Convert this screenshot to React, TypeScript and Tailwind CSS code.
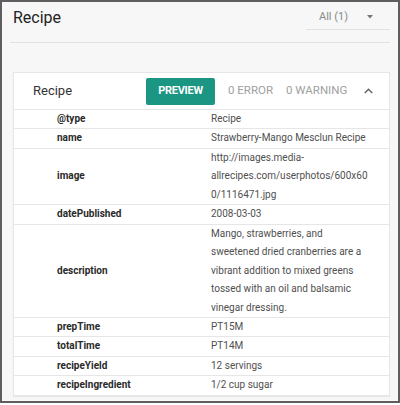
import React from "react";

const rows: { k: string; v: string }[] = [
  { k: "@type", v: "Recipe" },
  { k: "name", v: "Strawberry-Mango Mesclun Recipe" },
  { k: "image", v: "http://images.media-allrecipes.com/userphotos/600x600/1116471.jpg" },
  { k: "datePublished", v: "2008-03-03" },
  {
    k: "description",
    v: "Mango, strawberries, and sweetened dried cranberries are a vibrant addition to mixed greens tossed with an oil and balsamic vinegar dressing.",
  },
  { k: "prepTime", v: "PT15M" },
  { k: "totalTime", v: "PT14M" },
  { k: "recipeYield", v: "12 servings" },
  { k: "recipeIngredient", v: "1/2 cup sugar" },
];

export default function App() {
  return (
    <div className="w-[400px] h-[405px] bg-white" style={{ fontFamily: "Roboto, 'Noto Sans', sans-serif" }}>
      <div className="w-[400px] h-[403px] border-2 border-[#5e5e5e] bg-[#f7f7f7] flex flex-col">
        {/* page header */}
        <div className="shrink-0 flex items-start justify-between h-[41px] mx-[8px] border-b border-[#e2e2e2]">
          <div className="pl-[3px] pt-[6px] text-[16px] leading-[20px] text-[#222]">Recipe</div>
          <div className="w-[84px] h-[28px] border-b border-[#e2e2e2] flex items-center justify-between pl-[13px] pr-[17px] pt-[3px]">
            <span className="text-[11px] text-[#8a8a8a]">All (1)</span>
            <svg width="6" height="4" viewBox="0 0 6 4">
              <path d="M0 0 L6 0 L3 3.5 Z" fill="#777" />
            </svg>
          </div>
        </div>

        {/* result card */}
        <div className="shrink-0 mt-[29px] ml-[11px] mr-[8px] bg-white border border-[#e6e6e6] shadow-[0_1px_1px_rgba(0,0,0,0.06)]">
          <div className="h-[37px] flex items-center border-b border-[#e6e6e6] whitespace-nowrap">
            <div className="w-[132px] pl-[19px] text-[13px] text-[#333]">Recipe</div>
            <div className="w-[69px] h-[27px] rounded-[2px] bg-[#1a9683] flex items-center justify-center text-white font-bold text-[11px] tracking-[-0.3px]">
              PREVIEW
            </div>
            <div className="ml-[13px] text-[11.5px] text-[#a0a0a0]">0 ERROR</div>
            <div className="ml-[13px] text-[11.5px] text-[#a0a0a0]">0 WARNING</div>
            <svg className="ml-[17px]" width="9" height="6" viewBox="0 0 9 6">
              <path d="M0.8 5 L4.5 1.3 L8.2 5" stroke="#666" strokeWidth="1.5" fill="none" />
            </svg>
          </div>
          {rows.map((r, i) => (
            <div
              key={r.k}
              className={`grid grid-cols-[197px_159px] ${i < rows.length - 1 ? "border-b border-[#e6e6e6]" : ""}`}
            >
              <div className="pl-[43px] flex items-center text-[10px] font-bold text-[#2a2a2a] leading-[18.45px]">{r.k}</div>
              <div className="text-[10px] text-[#4f4f4f] leading-[18.45px] [overflow-wrap:anywhere]">{r.v}</div>
            </div>
          ))}
        </div>
      </div>
    </div>
  );
}
